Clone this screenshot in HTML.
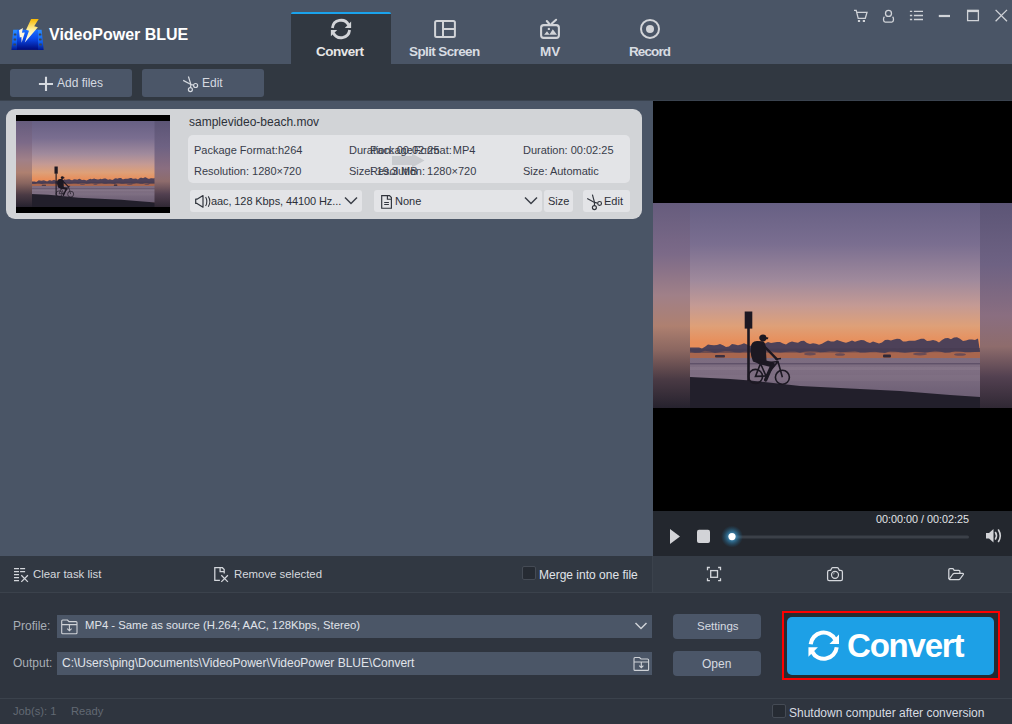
<!DOCTYPE html>
<html><head><meta charset="utf-8">
<style>
*{margin:0;padding:0;box-sizing:border-box}
html,body{width:1012px;height:724px;overflow:hidden;background:#4a5566;font-family:"Liberation Sans",sans-serif}
.a{position:absolute}
.t{position:absolute;white-space:nowrap;line-height:1}
svg{position:absolute;overflow:visible}
</style></head><body>

<svg width="0" height="0" style="position:absolute">
 <defs>
  <linearGradient id="sky" x1="0" y1="0" x2="0" y2="205" gradientUnits="userSpaceOnUse">
   <stop offset="0" stop-color="#676084"/>
   <stop offset="0.2" stop-color="#7a6e90"/>
   <stop offset="0.38" stop-color="#a08a9c"/>
   <stop offset="0.5" stop-color="#c49a94"/>
   <stop offset="0.6" stop-color="#dea078"/>
   <stop offset="0.68" stop-color="#e88e5a"/>
  </linearGradient>
  <linearGradient id="sea" x1="0" y1="155" x2="0" y2="195" gradientUnits="userSpaceOnUse">
   <stop offset="0" stop-color="#7c6c80"/>
   <stop offset="0.35" stop-color="#7e6e82"/>
   <stop offset="1" stop-color="#6c5e74"/>
  </linearGradient>
  <linearGradient id="stripL" x1="0" y1="0" x2="0" y2="1">
   <stop offset="0" stop-color="#665c7d"/>
   <stop offset="0.25" stop-color="#7c6a88"/>
   <stop offset="0.45" stop-color="#a08088"/>
   <stop offset="0.6" stop-color="#ae8070"/>
   <stop offset="0.72" stop-color="#8a6660"/>
   <stop offset="0.86" stop-color="#4a3a44"/>
   <stop offset="1" stop-color="#26222e"/>
  </linearGradient>
  <linearGradient id="stripR" x1="0" y1="0" x2="0" y2="1">
   <stop offset="0" stop-color="#5c5576"/>
   <stop offset="0.3" stop-color="#6e6283"/>
   <stop offset="0.55" stop-color="#8a6e80"/>
   <stop offset="0.7" stop-color="#8e6c6c"/>
   <stop offset="0.85" stop-color="#524050"/>
   <stop offset="1" stop-color="#302834"/>
  </linearGradient>
  <symbol id="photo" viewBox="0 0 290 205" preserveAspectRatio="none">
   <rect x="0" y="0" width="290" height="205" fill="url(#sky)"/>
   <rect x="0" y="147" width="290" height="9" fill="#a8664e"/>
   <path d="M0.0 144.4 L3.0 144.4 L6.0 144.4 L9.0 144.4 L12.0 145.5 L15.0 143.7 L18.0 141.4 L21.0 142.0 L24.0 142.2 L27.0 142.0 L30.0 141.0 L33.0 142.3 L36.0 143.9 L39.0 143.4 L42.0 141.1 L45.0 141.5 L48.0 142.2 L51.0 141.4 L54.0 140.3 L57.0 141.6 L60.0 143.0 L63.0 141.6 L66.0 142.2 L69.0 142.5 L72.0 142.4 L75.0 140.4 L78.0 139.0 L81.0 140.0 L84.0 139.6 L87.0 139.1 L90.0 139.0 L93.0 140.4 L96.0 141.4 L99.0 139.6 L102.0 138.6 L105.0 139.3 L108.0 139.8 L111.0 138.1 L114.0 137.7 L117.0 139.9 L120.0 140.9 L123.0 140.2 L126.0 140.8 L129.0 141.7 L132.0 140.8 L135.0 138.9 L138.0 137.6 L141.0 138.6 L144.0 138.4 L147.0 136.9 L150.0 138.1 L153.0 138.9 L156.0 139.7 L159.0 138.8 L162.0 137.6 L165.0 138.8 L168.0 137.7 L171.0 136.9 L174.0 137.3 L177.0 139.0 L180.0 140.0 L183.0 138.6 L186.0 139.5 L189.0 140.4 L192.0 139.4 L195.0 137.0 L198.0 136.7 L201.0 137.5 L204.0 136.4 L207.0 135.8 L210.0 136.0 L213.0 138.6 L216.0 138.6 L219.0 137.8 L222.0 137.7 L225.0 137.7 L228.0 136.8 L231.0 135.7 L234.0 135.7 L237.0 137.9 L240.0 137.7 L243.0 137.0 L246.0 137.7 L249.0 139.4 L252.0 137.1 L255.0 135.2 L258.0 135.1 L261.0 136.2 L264.0 134.4 L267.0 134.2 L270.0 135.8 L273.0 137.9 L276.0 137.5 L279.0 136.6 L282.0 136.4 L285.0 136.9 L288.0 135.4 L290.0 148.7 L285.0 149.0 L280.0 149.2 L275.0 149.3 L270.0 148.2 L265.0 148.1 L260.0 149.4 L255.0 149.8 L250.0 148.5 L245.0 147.7 L240.0 149.1 L235.0 149.7 L230.0 149.0 L225.0 148.7 L220.0 149.2 L215.0 149.8 L210.0 149.3 L205.0 148.4 L200.0 148.3 L195.0 150.1 L190.0 149.6 L185.0 148.7 L180.0 148.9 L175.0 149.5 L170.0 149.4 L165.0 148.0 L160.0 148.5 L155.0 149.0 L150.0 149.2 L145.0 148.3 L140.0 147.9 L135.0 149.1 L130.0 149.3 L125.0 148.3 L120.0 147.9 L115.0 148.6 L110.0 149.7 L105.0 148.6 L100.0 148.6 L95.0 148.9 L90.0 149.4 L85.0 149.0 L80.0 148.1 L75.0 148.5 L70.0 149.3 L65.0 149.8 L60.0 148.9 L55.0 148.4 L50.0 149.5 L45.0 149.2 L40.0 148.2 L35.0 148.1 L30.0 149.1 L25.0 150.1 L20.0 148.4 L15.0 147.7 L10.0 149.6 L5.0 149.8 L0.0 148.6 Z" fill="#4d4158"/>
   <path d="M0 146 L290 145 L290 149 L0 150 Z" fill="#463a50" opacity="0.6"/>
   <g fill="#5a4658" opacity="0.8">
    <ellipse cx="120" cy="151" rx="6" ry="1.5"/><ellipse cx="150" cy="151.5" rx="5" ry="1.3"/><ellipse cx="230" cy="151" rx="7" ry="1.4"/><ellipse cx="270" cy="151.5" rx="6" ry="1.3"/>
   </g>
   <rect x="0" y="155" width="290" height="40" fill="url(#sea)"/>
   <rect x="0" y="160" width="290" height="1.4" fill="#524660" opacity="0.7"/>
   <rect x="0" y="164" width="290" height="3" fill="#9a8a9a" opacity="0.25"/>
   <rect x="0" y="172" width="290" height="6" fill="#9a8a9a" opacity="0.12"/>
   <rect x="25" y="152" width="10" height="2.5" rx="1" fill="#3a3040"/>
   <rect x="193" y="151.5" width="8" height="3" rx="1" fill="#2e2838"/>
   <path d="M0 174 L40 176 L60 177.5 L110 183 L160 185.5 L210 188 L260 192 L290 194 L290 205 L0 205 Z" fill="#221f2b"/>
   <g fill="#1c1822">
    <rect x="54.7" y="108.5" width="7.6" height="17.1"/>
    <rect x="57.2" y="125" width="2.6" height="53"/>
    <circle cx="73" cy="135" r="3.4"/>
    <path d="M69.5 133.2 L78.4 134.6 L77.8 136.2 L69.5 136.2 Z"/>
    <path d="M61 144 Q61 138.5 67 138 L73 138.3 Q75.8 140 75.8 145 L76.5 158 L71 161.5 L63 158.5 Q59.5 150 61 144 Z"/>
   </g>
   <g fill="none" stroke="#1c1822" stroke-linecap="round">
    <path d="M69.5 158.5 L82.3 161.7" stroke-width="5"/>
    <path d="M82.3 161.7 L75.6 177" stroke-width="3.4"/>
    <path d="M73 142 L87 156.4" stroke-width="2.4"/>
   </g>
   <g fill="none" stroke="#1c1822" stroke-width="1.6">
    <circle cx="65.5" cy="173.4" r="7"/>
    <circle cx="92.4" cy="174.3" r="7"/>
    <path d="M65.5 173.4 L70.5 160.5 L76 173 Z M70.5 160.5 L88 158.5 L92.4 174.3 M76 173 L88 158.5 M85.5 156.3 L91 155.5"/>
   </g>
  </symbol>
 </defs>
</svg>
<!-- title bar -->
<div class="a" style="left:0;top:0;width:1012px;height:64px;background:#4a5566"></div>
<!-- logo -->
<svg style="left:8px;top:15px" width="40" height="38" viewBox="0 0 40 38">
  <defs>
    <linearGradient id="lgB" x1="0" y1="0" x2="0" y2="1"><stop offset="0" stop-color="#1c70ff"/><stop offset="0.45" stop-color="#0a48e8"/><stop offset="1" stop-color="#000a78"/></linearGradient>
    <linearGradient id="lgS" x1="0" y1="0" x2="0" y2="1"><stop offset="0" stop-color="#2a8cff"/><stop offset="0.6" stop-color="#1060f0"/><stop offset="1" stop-color="#001890"/></linearGradient>
    <linearGradient id="lgY" x1="0" y1="0" x2="0" y2="1"><stop offset="0" stop-color="#f8b800"/><stop offset="0.45" stop-color="#fff0a0"/><stop offset="1" stop-color="#ffffff"/></linearGradient>
  </defs>
  <path d="M5.2 14.7 L9.5 14.7 L9.5 34.9 L3.4 34.9 Z" fill="url(#lgS)"/>
  <path d="M29.5 14.7 L33.6 14.7 L35.7 34.9 L29.5 34.9 Z" fill="url(#lgS)"/>
  <path d="M9 14.7 L30 14.7 L30 34.9 L9 34.9 Z" fill="url(#lgB)"/>
  <g fill="#3a4658">
    <rect x="5.8" y="18.6" width="2.6" height="2" rx="0.6"/><rect x="5.6" y="23.4" width="2.6" height="2" rx="0.6"/><rect x="5.4" y="28.4" width="2.6" height="2" rx="0.6"/>
    <rect x="30.8" y="18.6" width="2.6" height="2" rx="0.6"/><rect x="31" y="23.4" width="2.6" height="2" rx="0.6"/><rect x="31.2" y="28.4" width="2.6" height="2" rx="0.6"/>
  </g>
  <path d="M23.1 3.9 L30.7 3.9 L26.2 11.3 L29.9 12.3 L16.8 27.6 L21 15.7 L18.1 14.7 Z" fill="url(#lgY)"/>
  <path d="M11 15.2 L15 13.1 L13.9 17.8 L16.8 17.6 L13.6 27.8 L13.4 22 L11.8 22.6 Z" fill="#fff6dc"/>
</svg>
<div class="t" style="left:49px;top:27px;font-size:16px;font-weight:bold;color:#fff">VideoPower BLUE</div>

<!-- tabs -->
<div class="a" style="left:291px;top:12px;width:100px;height:52px;background:#313841;border-top:2px solid #1aa3ec;border-radius:2px 2px 0 0"></div>
<div class="t" style="left:316px;top:45px;font-size:13.5px;font-weight:bold;color:#e6e6e6;letter-spacing:-0.5px">Convert</div>
<div class="t" style="left:409px;top:45px;font-size:13.5px;font-weight:bold;color:#d8dce2;letter-spacing:-0.62px">Split Screen</div>
<div class="t" style="left:540px;top:45px;font-size:13.5px;font-weight:bold;color:#d8dce2">MV</div>
<div class="t" style="left:629px;top:45px;font-size:13.5px;font-weight:bold;color:#d8dce2;letter-spacing:-0.9px">Record</div>

<!-- toolbar -->
<div class="a" style="left:0;top:64px;width:1012px;height:37px;background:#313841;border-bottom:1px solid #3a434f"></div>
<div class="a" style="left:10px;top:69px;width:122px;height:28px;background:#4b5668;border-radius:3px"></div>
<div class="t" style="left:57px;top:77px;font-size:12px;color:#d6dae0">Add files</div>
<div class="a" style="left:142px;top:69px;width:122px;height:28px;background:#4b5668;border-radius:3px"></div>
<div class="t" style="left:202px;top:77px;font-size:12px;color:#d6dae0">Edit</div>

<!-- file card -->
<div class="a" style="left:6px;top:109px;width:636px;height:110px;background:#d2d4d7;border-radius:9px"></div>
<div class="a" style="left:16px;top:115px;width:154px;height:98px;background:#000"></div>
<svg style="left:16px;top:121px" width="154" height="86" viewBox="0 0 154 86">
  <use href="#photo" x="15" y="0" width="124.5" height="86"/>
  <rect x="0" y="0" width="16" height="86" fill="url(#stripL)"/>
  <rect x="138.5" y="0" width="15.5" height="86" fill="url(#stripR)"/>
</svg>
<div class="t" style="left:189px;top:116px;font-size:12px;color:#2c3038">samplevideo-beach.mov</div>
<div class="a" style="left:188px;top:135px;width:442px;height:48px;background:#e3e4e7;border-radius:5px"></div>
<div class="a" style="left:190px;top:190px;width:172px;height:22px;background:#e3e4e7;border-radius:3px"></div>
<div class="a" style="left:374px;top:190px;width:168px;height:22px;background:#e3e4e7;border-radius:3px"></div>
<div class="a" style="left:544px;top:190px;width:29px;height:22px;background:#e3e4e7;border-radius:3px"></div>
<div class="a" style="left:583px;top:190px;width:47px;height:22px;background:#e3e4e7;border-radius:3px"></div>


<!-- card details -->
<div class="t" style="left:194px;top:145px;font-size:11px;color:#383c4a">Package Format:</div><div class="t" style="left:278px;top:145px;font-size:11px;color:#383c4a">h264</div>
<div class="t" style="left:194px;top:166px;font-size:11px;color:#383c4a">Resolution: 1280×720</div>
<div class="t" style="left:349px;top:145px;font-size:11px;color:#383c4a">Duration: 00:02:25</div>
<div class="t" style="left:349px;top:166px;font-size:11px;color:#383c4a">Size: 19.3 MB</div>
<svg style="left:388px;top:150px" width="40" height="20" viewBox="0 0 40 20"><path d="M4 6 H24 V3.5 L36.5 10.5 L24 17.5 V15 H4 Z" fill="#c9cbcf"/></svg>
<div class="t" style="left:370px;top:145px;font-size:11px;color:#383c4a;word-spacing:-2px">Package Format: MP4</div>
<div class="t" style="left:370px;top:166px;font-size:11px;color:#383c4a;word-spacing:-1px">Resolution: 1280×720</div>
<div class="t" style="left:523px;top:145px;font-size:11px;color:#383c4a">Duration: 00:02:25</div>
<div class="t" style="left:523px;top:166px;font-size:11px;color:#383c4a">Size: Automatic</div>
<!-- dropdown row -->
<svg style="left:190px;top:190px" width="30" height="22" viewBox="0 0 30 22">
  <path d="M5.7 9.2 H7 L13 5.6 V17.2 L7 13.4 H5.7 Z" fill="none" stroke="#30343c" stroke-width="1.2" stroke-linejoin="round"/>
  <path d="M15.6 7 Q18.2 11.3 15.6 16.1 M18.3 6.4 Q21.4 11.3 18.3 16.8" fill="none" stroke="#30343c" stroke-width="1.05"/>
</svg>
<div class="t" style="left:211px;top:196px;font-size:11px;color:#2c3038;letter-spacing:-0.1px">aac, 128 Kbps, 44100 Hz...</div>
<svg style="left:340px;top:190px" width="22" height="22" viewBox="0 0 22 22"><path d="M5 7.5 L11 13.5 L17 7.5" fill="none" stroke="#3c4048" stroke-width="1.5"/></svg>
<svg style="left:374px;top:190px" width="22" height="22" viewBox="0 0 22 22">
  <path d="M7.7 5.6 H15.5 L17.4 7.6 V18.2 H7.7 Z M13.4 5.6 V9.2 H17.4 M10.2 12.5 H14.9 M10.2 14.5 H14.9" fill="none" stroke="#30343c" stroke-width="1.15"/>
</svg>
<div class="t" style="left:395px;top:196px;font-size:11px;color:#2c3038">None</div>
<svg style="left:520px;top:190px" width="22" height="22" viewBox="0 0 22 22"><path d="M5 7.5 L11 13.5 L17 7.5" fill="none" stroke="#3c4048" stroke-width="1.5"/></svg>
<div class="t" style="left:548px;top:196px;font-size:11px;color:#2c3038">Size</div>
<svg style="left:583px;top:190px" width="22" height="22" viewBox="0 0 22 22">
  <g fill="none" stroke="#30343c" stroke-width="1.15">
    <path d="M9.4 4.6 L11.5 12.4 L11.4 15.5"/>
    <path d="M4.2 8.4 L11.5 12.4 L14.6 13.1"/>
    <circle cx="11.4" cy="17.6" r="2"/>
    <circle cx="16.6" cy="13.4" r="1.9"/>
  </g>
</svg>
<div class="t" style="left:604px;top:196px;font-size:11px;color:#2c3038">Edit</div>

<!-- preview -->
<div class="a" style="left:653px;top:101px;width:359px;height:410px;background:#000"></div>
<svg style="left:653px;top:203px" width="359" height="205" viewBox="0 0 359 205">
  <use href="#photo" x="37" y="0" width="290" height="205"/>
  <rect x="0" y="0" width="37" height="205" fill="url(#stripL)"/>
  <rect x="327" y="0" width="32" height="205" fill="url(#stripR)"/>
</svg>
<div class="a" style="left:653px;top:511px;width:359px;height:45px;background:#23272e"></div>

<!-- bottom row -->
<div class="a" style="left:0;top:556px;width:1012px;height:36px;background:#313842"></div>
<div class="a" style="left:652px;top:556px;width:1px;height:36px;background:#3b424c"></div>
<div class="t" style="left:33px;top:569px;font-size:11.4px;color:#d6d9de">Clear task list</div>
<div class="t" style="left:234px;top:569px;font-size:11.4px;color:#d6d9de">Remove selected</div>
<div class="a" style="left:522px;top:566px;width:14px;height:14px;background:#262b33;border:1px solid #454b55;border-radius:2px"></div>
<div class="t" style="left:539px;top:569px;font-size:12px;color:#e0e4ea">Merge into one file</div>

<!-- profile area -->
<div class="a" style="left:0;top:592px;width:1012px;height:132px;background:#2f353f"></div>
<div class="a" style="left:0;top:592px;width:1012px;height:1px;background:#3b424c"></div>
<div class="t" style="left:13px;top:620px;font-size:12px;color:#a8aeb6">Profile:</div>
<div class="a" style="left:57px;top:615px;width:595px;height:23px;background:#4b5667"></div>
<div class="t" style="left:85px;top:620px;font-size:11.3px;color:#e0e4ea">MP4 - Same as source (H.264; AAC, 128Kbps, Stereo)</div>
<div class="t" style="left:13px;top:657px;font-size:12px;color:#a8aeb6">Output:</div>
<div class="a" style="left:57px;top:652px;width:595px;height:23px;background:#4b5667"></div>
<div class="t" style="left:62px;top:657px;font-size:12px;color:#e0e4ea">C:\Users\ping\Documents\VideoPower\VideoPower BLUE\Convert</div>
<div class="a" style="left:673px;top:614px;width:88px;height:25px;background:#4b5668;border-radius:4px"></div>
<div class="t" style="left:697px;top:621px;font-size:11.5px;color:#d6dae0">Settings</div>
<div class="a" style="left:673px;top:651px;width:88px;height:25px;background:#4b5668;border-radius:4px"></div>
<div class="t" style="left:702px;top:658px;font-size:12px;color:#d6dae0">Open</div>

<div class="a" style="left:782px;top:611px;width:218px;height:69px;border:2px solid #ff0000;background:#272b31"></div>
<div class="a" style="left:787px;top:617px;width:207px;height:58px;background:#1da0e6;border-radius:5px"></div>
<div class="t" style="left:847px;top:629px;font-size:33px;font-weight:bold;color:#fff;letter-spacing:-1.2px">Convert</div>

<div class="a" style="left:0;top:698px;width:1012px;height:1px;background:#3b424c"></div>
<div class="t" style="left:13px;top:706px;font-size:11.2px;color:#626973">Job(s): 1</div>
<div class="t" style="left:71px;top:706px;font-size:11.2px;color:#626973">Ready</div>
<div class="a" style="left:772px;top:704px;width:14px;height:14px;background:#262b33;border:1px solid #454b55;border-radius:2px"></div>
<div class="t" style="left:789px;top:707px;font-size:12px;color:#d8dce2">Shutdown computer after conversion</div>

<!-- tab icons -->
<svg style="left:326px;top:14px" width="30" height="30" viewBox="0 0 30 30">
  <g fill="none" stroke="#d2d4d8" stroke-width="2.8">
    <path d="M6.4 14 A8.6 8.6 0 0 1 22.6 11"/>
    <path d="M23.6 16 A8.6 8.6 0 0 1 7.4 19"/>
  </g>
  <path d="M25.1 7.6 L25.1 13.9 L18.8 13.9 Z" fill="#d2d4d8"/>
  <path d="M4.9 16 L4.9 22.3 L11.2 16 Z" fill="#d2d4d8"/>
</svg>
<svg style="left:430px;top:14px" width="30" height="30" viewBox="0 0 30 30">
  <g fill="none" stroke="#d2d4d8" stroke-width="2">
    <rect x="5.1" y="7" width="19.8" height="16" rx="1.5"/>
    <path d="M13 7 V23 M13 14.9 H25"/>
  </g>
</svg>
<svg style="left:535px;top:14px" width="30" height="30" viewBox="0 0 30 30">
  <g fill="none" stroke="#d2d4d8" stroke-width="2.1" stroke-linecap="round">
    <rect x="6.1" y="11.1" width="17.8" height="12.8" rx="2.6"/>
    <path d="M11.8 7 L14.2 9.8 M21.1 5.8 L16.6 9.8"/>
  </g>
  <g fill="#d2d4d8">
    <rect x="12.8" y="13.9" width="2.1" height="2.1"/>
    <path d="M9.1 20.8 L12 17.2 L14.7 20.8 Z M14.3 20.8 L17.8 15.3 L22 20.8 Z"/>
  </g>
</svg>
<svg style="left:635px;top:14px" width="30" height="30" viewBox="0 0 30 30">
  <circle cx="15" cy="14.9" r="9" fill="none" stroke="#d2d4d8" stroke-width="2"/>
  <circle cx="15" cy="14.9" r="4" fill="#d2d4d8"/>
</svg>
<!-- window controls -->
<svg style="left:850px;top:5px" width="162" height="22" viewBox="0 0 162 22">
  <g fill="none" stroke="#d0d3d8" stroke-width="1.3">
    <path d="M4 5.3 H6.2 L8.2 13.3 H15.3 L17 7.4 H6.8"/>
    <circle cx="38.5" cy="8.4" r="3"/>
    <path d="M34.4 11.8 C33 13 33.2 17.1 35.2 17.1 H41.8 C43.8 17.1 44 13 42.6 11.8"/>
    <path d="M8.9 6.4 H18 M8.9 10.5 H18 M8.9 14.5 H18" transform="translate(55,0)"/>
    <path d="M4.9 6.4 H7.2 M4.9 10.5 H7.2 M4.9 14.5 H7.2" transform="translate(55,0)"/>
    <path d="M117.6 5.5 H128.4 V15.6 H117.6 Z"/>
    <path d="M145.6 4.9 L157 16.3 M157 4.9 L145.6 16.3"/>
  </g>
  <g fill="#d0d3d8">
    <rect x="7.9" y="15" width="2.2" height="2"/>
    <rect x="12.8" y="15" width="2.2" height="2"/>
    <rect x="88.8" y="9.9" width="11.2" height="2.2"/>
    <rect x="117" y="4.9" width="11.2" height="2.2"/>
  </g>
</svg>
<!-- toolbar icons -->
<svg style="left:34px;top:70px" width="30" height="26" viewBox="0 0 30 26">
  <path d="M4.9 14 H19 M12 6.8 V21" stroke="#d6dae0" stroke-width="2.1" fill="none"/>
</svg>
<svg style="left:178px;top:70px" width="30" height="26" viewBox="0 0 30 26">
  <g fill="none" stroke="#d6dae0" stroke-width="1.2">
    <path d="M10.4 6.5 L12.9 14.5 L12.5 17.5"/>
    <path d="M5.2 10.4 L12.9 14.5 L15.5 15.2"/>
    <circle cx="12.4" cy="19.6" r="2"/>
    <circle cx="17.6" cy="15.5" r="2"/>
  </g>
</svg>

<!-- player controls -->
<svg style="left:653px;top:511px" width="359" height="45" viewBox="0 0 359 45">
  <defs>
    <radialGradient id="glow" cx="0.5" cy="0.5" r="0.5">
      <stop offset="0" stop-color="#7fd0ff" stop-opacity="0.9"/>
      <stop offset="0.45" stop-color="#3aa0d8" stop-opacity="0.55"/>
      <stop offset="1" stop-color="#1a70a0" stop-opacity="0"/>
    </radialGradient>
  </defs>
  <path d="M17 18 L27 25.5 L17 33 Z" fill="#d2d3d7"/>
  <rect x="44" y="18.7" width="13" height="13.3" rx="2" fill="#d2d3d7"/>
  <rect x="79" y="24.5" width="237" height="3" rx="1.5" fill="#3b4048"/>
  <circle cx="79" cy="25.6" r="11" fill="url(#glow)"/>
  <circle cx="79" cy="25.6" r="3.6" fill="#ffffff"/>
  <path d="M333 22 H336 L340.5 18 V31.5 L336 27.5 H333 Z" fill="#d2d3d7"/>
  <path d="M342.5 21.5 Q344.5 24.8 342.5 28 M345.5 19 Q349 24.8 345.5 30.5" fill="none" stroke="#d2d3d7" stroke-width="1.6" stroke-linecap="round"/>
</svg>
<div class="t" style="left:876px;top:514px;font-size:10.8px;color:#e2e4e8">00:00:00 / 00:02:25</div>

<!-- preview bottom icons -->
<div class="a" style="left:653px;top:556px;width:359px;height:36px;background:#353c46"></div>
<svg style="left:700px;top:560px" width="30" height="28" viewBox="0 0 30 28">
  <g fill="none" stroke="#d4d7dc" stroke-width="1.3">
    <path d="M7.5 10.2 V7.5 H9.9 M18.1 7.5 H20.5 V10.2 M20.5 18.2 V20.6 H18.1 M9.9 20.6 H7.5 V18.2"/>
    <rect x="10.7" y="10.6" width="6.8" height="6.7"/>
  </g>
</svg>
<svg style="left:820px;top:560px" width="30" height="28" viewBox="0 0 30 28">
  <g fill="none" stroke="#d4d7dc" stroke-width="1.25" stroke-linejoin="round">
    <path d="M7.6 12 Q7.6 10.4 9.2 10.4 H10.6 L11.7 8.2 Q12 7.6 12.8 7.6 H17.2 Q18 7.6 18.3 8.2 L19.4 10.4 H20.8 Q22.4 10.4 22.4 12 V19 Q22.4 20.6 20.8 20.6 H9.2 Q7.6 20.6 7.6 19 Z"/>
    <circle cx="15" cy="14.8" r="3.5"/>
  </g>
  <path d="M13.4 14.4 Q13.6 13.2 14.6 12.9" fill="none" stroke="#d4d7dc" stroke-width="0.7"/>
</svg>
<svg style="left:940px;top:560px" width="30" height="28" viewBox="0 0 30 28">
  <g fill="none" stroke="#d4d7dc" stroke-width="1.25" stroke-linejoin="round">
    <path d="M8.8 19 V9.8 Q8.8 8.6 10 8.6 H13 L14.2 10.3 H18.7 Q19.9 10.3 19.9 11.5 V13.4"/>
    <path d="M9.2 19.2 L13 14 Q13.5 13.4 14.4 13.4 H22.6 Q23.9 13.5 23.2 14.6 L20 19 Q19.6 19.5 19 19.5 H9.6 Z"/>
  </g>
</svg>
<svg style="left:0px;top:556px" width="40" height="36" viewBox="0 0 40 36">
  <g fill="none" stroke="#d4d7dc" stroke-width="1.25">
    <path d="M14 12.5 H19 M20.1 12.5 H25.1 M14 15.5 H19 M20.1 15.5 H25.1 M14 18.5 H19 M14 21.5 H19 M14 24.5 H19"/>
    <path d="M21.3 19.3 L27.9 25.9 M27.9 19.3 L21.3 25.9"/>
  </g>
</svg>
<svg style="left:200px;top:556px" width="40" height="36" viewBox="0 0 40 36">
  <g fill="none" stroke="#d4d7dc" stroke-width="1.25">
    <path d="M19.9 24.4 H14.8 V11.7 H22.4 L24.2 13.5 V17.6"/>
    <path d="M20.1 11.7 V15.6 H24.2"/>
    <path d="M21.3 19.3 L27.9 25.9 M27.9 19.3 L21.3 25.9"/>
  </g>
</svg>
<!-- profile icons -->
<svg style="left:57px;top:615px" width="24" height="23" viewBox="0 0 24 23">
  <g fill="none" stroke="#cfd2d7" stroke-width="1.1">
    <path d="M5.7 5 H10.5 L12 6.6 H19 Q20 6.6 20 7.6 V17.8 Q20 18.8 19 18.8 H5.7 Q4.7 18.8 4.7 17.8 V6 Q4.7 5 5.7 5 Z M4.7 9.6 H20"/>
    <path d="M12.4 9.6 V15.6 M10.2 13.6 L12.4 15.8 L14.6 13.6"/>
  </g>
</svg>
<svg style="left:630px;top:615px" width="22" height="23" viewBox="0 0 22 23">
  <path d="M5.5 8 L11 13.5 L16.5 8" fill="none" stroke="#cfd2d7" stroke-width="1.5"/>
</svg>
<svg style="left:630px;top:652px" width="22" height="23" viewBox="0 0 22 23">
  <g fill="none" stroke="#cfd2d7" stroke-width="1.1">
    <path d="M5 5.5 H9.5 L11 7 H17.6 Q18.6 7 18.6 8 V17.4 Q18.6 18.4 17.6 18.4 H5 Q4 18.4 4 17.4 V6.5 Q4 5.5 5 5.5 Z M4 10 H18.6"/>
    <path d="M11.3 10 V15.6 M9.2 13.6 L11.3 15.7 L13.4 13.6"/>
  </g>
</svg>
<!-- big convert icon -->
<svg style="left:801px;top:623px" width="45.4" height="45.4" viewBox="0 0 30 30">
  <g fill="none" stroke="#ffffff" stroke-width="2.7">
    <path d="M6.4 14 A8.6 8.6 0 0 1 22.6 11"/>
    <path d="M23.6 16 A8.6 8.6 0 0 1 7.4 19"/>
  </g>
  <path d="M25.1 7.6 L25.1 13.9 L18.8 13.9 Z" fill="#ffffff"/>
  <path d="M4.9 16 L4.9 22.3 L11.2 16 Z" fill="#ffffff"/>
</svg>
</body></html>
